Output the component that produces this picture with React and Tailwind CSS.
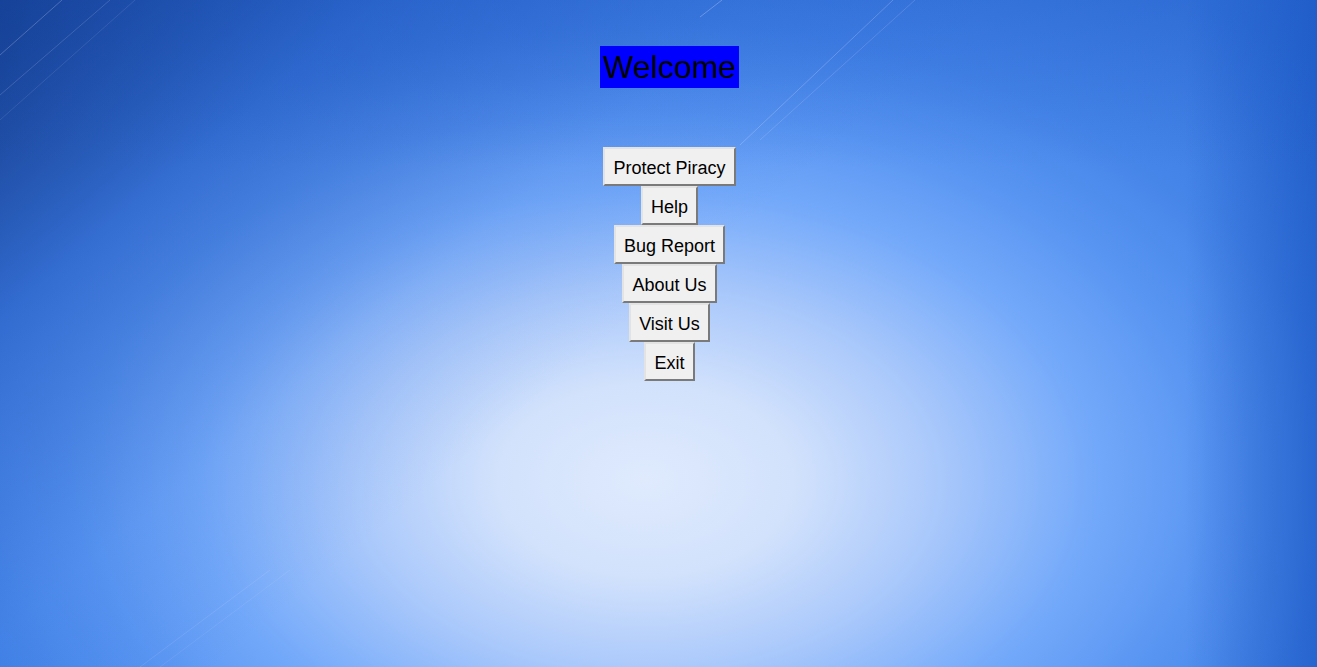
import React from "react";

const menu = ["Protect Piracy", "Help", "Bug Report", "About Us", "Visit Us", "Exit"];

function Streaks() {
  return (
    <svg className="pointer-events-none absolute inset-0 h-full w-full" viewBox="0 0 1317 667" preserveAspectRatio="none">
      <g stroke="#ffffff" strokeWidth="1" fill="none">
        <line x1="0" y1="55" x2="62" y2="0" strokeOpacity="0.22" />
        <line x1="0" y1="95" x2="110" y2="0" strokeOpacity="0.15" />
        <line x1="0" y1="120" x2="135" y2="0" strokeOpacity="0.1" />
        <line x1="700" y1="17" x2="722" y2="0" strokeOpacity="0.25" />
        <line x1="740" y1="145" x2="893" y2="0" strokeOpacity="0.2" />
        <line x1="760" y1="140" x2="915" y2="0" strokeOpacity="0.14" />
        <line x1="140" y1="667" x2="270" y2="570" strokeOpacity="0.1" />
        <line x1="160" y1="667" x2="290" y2="570" strokeOpacity="0.08" />
      </g>
    </svg>
  );
}

export default function App() {
  return (
    <div className="relative h-[667px] w-full overflow-hidden bg-[radial-gradient(ellipse_70%_90%_at_49%_72%,#dfeafd_0%,#d2e2fc_16%,#a9c8fb_32%,#75aafa_48%,#5895f2_62%,#4584e8_76%,#3776dc_100%)]">
      {/* dark corner wash */}
      <div className="pointer-events-none absolute inset-0 bg-[linear-gradient(140deg,rgba(10,40,110,0.8)_0%,rgba(20,70,170,0.4)_18%,rgba(30,90,200,0.1)_36%,rgba(30,90,200,0)_48%)]" />
      <div className="pointer-events-none absolute inset-0 bg-[linear-gradient(270deg,rgba(20,80,190,0.6)_0%,rgba(30,100,210,0)_10%)]" />
      <div className="pointer-events-none absolute inset-0 bg-[linear-gradient(180deg,rgba(30,90,200,0.3)_0%,rgba(30,90,200,0)_25%)]" />
      <Streaks />

      <div className="relative flex flex-col items-center pl-[22px] pt-[46px] font-['Liberation_Sans',Arial,sans-serif]">
        <h1 className="h-[42px] bg-[#0000ff] px-[3px] text-[32px] leading-[43px] text-black">Welcome</h1>

        <div className="mt-[59px] flex flex-col items-center">
          {menu.map((label) => (
            <button
              key={label}
              className="h-[39px] border-2 border-t-[#e3e3e3] border-l-[#e3e3e3] border-b-[#7a7a7a] border-r-[#7a7a7a] bg-[#f0f0f0] px-[8px] pt-[3px] text-[18px] leading-[21px] text-black"
            >
              {label}
            </button>
          ))}
        </div>
      </div>
    </div>
  );
}
